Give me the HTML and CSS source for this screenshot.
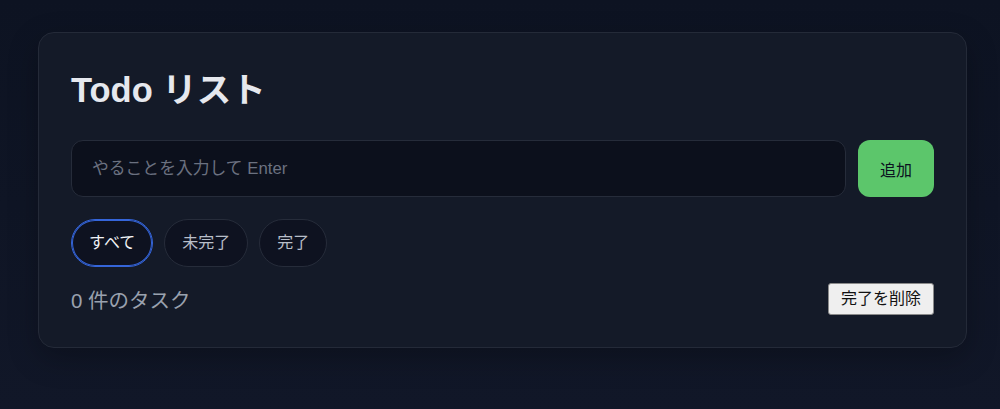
FILE: index.html
```html
<!DOCTYPE html>
<html lang="ja">
<head>
    <meta charset="UTF-8">
    <meta name="viewport" content="width=device-width, initial-scale=1.0">
    <title>Todo リスト</title>
    <link rel="stylesheet" href="styles.css">
</head>
<body>
    <div class="app">
        <div class="card">
            <h1 class="title">Todo リスト</h1>

            <div class="add-row">
                <input type="text" id="todo-input" class="todo-input" placeholder="やることを入力して Enter">
                <button id="add-button" class="add-button">追加</button>
            </div>

            <div class="filters">
                <button class="filter active">すべて</button>
                <button class="filter">未完了</button>
                <button class="filter">完了</button>
            </div>

            <div class="footer">
                <span id="count" class="count">0 件のタスク</span>
                <button id="clear-button" class="clear-button">完了を削除</button>
            </div>
        </div>
    </div>
</body>
</html>
```

FILE: styles.css
```css
/* Page */
body {
    margin: 0;
    min-height: 409px;
    font-family: "Liberation Sans", "Noto Sans CJK JP", sans-serif;
    background: linear-gradient(180deg, #0d1322 0%, #111728 100%);
    color: #e5e7eb;
}

.app {
    padding: 32px 33px 32px 38px;
}

/* Card */
.card {
    background-color: #141a28;
    border: 1px solid #242a38;
    border-radius: 16px;
    padding: 32px;
    box-shadow: 0 10px 30px rgba(0, 0, 0, 0.25);
}

.title {
    margin: 6px 0 31px;
    font-size: 34.5px;
    line-height: 38px;
    font-weight: bold;
    color: #e6e8ee;
}

/* Input row */
.add-row {
    display: flex;
    gap: 12px;
}

.todo-input {
    flex: 1;
    height: 57px;
    box-sizing: border-box;
    padding: 0 20px;
    font-family: inherit;
    font-size: 16.8px;
    color: #e5e7eb;
    background-color: #0c101c;
    border: 1px solid #262c3a;
    border-radius: 12px;
    outline: none;
}

.todo-input::placeholder {
    color: #6b7180;
}

.add-button {
    width: 76px;
    height: 57px;
    font-family: inherit;
    font-size: 16px;
    color: #0b1220;
    background-color: #5cc66b;
    border: none;
    border-radius: 12px;
    cursor: pointer;
}

/* Filters */
.filters {
    display: flex;
    gap: 11px;
    margin-top: 22px;
}

.filter {
    padding: 11px 17px;
    font-family: inherit;
    font-size: 16px;
    line-height: 24px;
    color: #b8bec9;
    background-color: #0e1220;
    border: 1px solid #262c3a;
    border-radius: 999px;
    cursor: pointer;
}

.filter.active {
    color: #f1f3f7;
    border-color: #3565d9;
    box-shadow: inset 0 0 0 1px #3565d9;
}

/* Footer */
.footer {
    display: flex;
    justify-content: space-between;
    align-items: center;
    margin-top: 16px;
}

.count {
    font-size: 20.5px;
    color: #9aa1ae;
}

.clear-button {
    padding: 4px 12px;
    font-family: inherit;
    font-size: 16px;
    line-height: 22px;
    color: #111;
    background-color: #efefef;
    border: 1px solid #8a8a8a;
    border-radius: 3px;
    cursor: pointer;
}
```
